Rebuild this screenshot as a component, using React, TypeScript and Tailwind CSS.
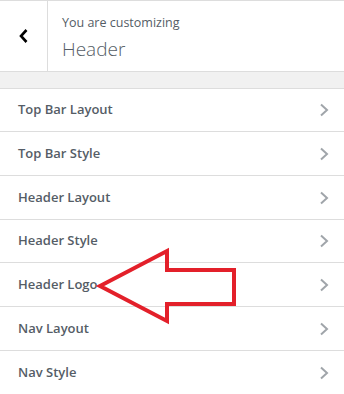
import React from "react";

const items: { t: string; h: string }[] = [
  { t: "Top Bar Layout", h: "h-[43px]" },
  { t: "Top Bar Style", h: "h-[44px]" },
  { t: "Header Layout", h: "h-[44px]" },
  { t: "Header Style", h: "h-[43px]" },
  { t: "Header Logo", h: "h-[44px]" },
  { t: "Nav Layout", h: "h-[44px]" },
  { t: "Nav Style", h: "h-[44px]" },
];

function Chevron() {
  return (
    <svg width="10" height="14" viewBox="0 0 10 14" className="block">
      <polyline points="2,1.5 8,7 2,12.5" fill="none" stroke="#a0a5aa" strokeWidth="2" />
    </svg>
  );
}

export default function App() {
  return (
    <div
      className="relative w-[344px] h-[394px] bg-white overflow-hidden"
      style={{ fontFamily: '"Open Sans", "Noto Sans", sans-serif' }}
    >
      <div className="flex h-[72px] border-t border-b border-[#dddddd]">
        <div className="w-[48px] border-r border-[#dddddd] flex items-center justify-center">
          <svg width="12" height="16" viewBox="0 0 12 16" className="block">
            <polyline points="8.5,2 3,8 8.5,14" fill="none" stroke="#000" strokeWidth="2.6" />
          </svg>
        </div>
        <div className="flex flex-col pl-[14px] pt-[14px]">
          <div className="text-[12.5px] leading-[16px] text-[#555d66]">You are customizing</div>
          <div className="text-[19px] leading-[26px] font-light text-[#555d66] mt-[5px]">Header</div>
        </div>
      </div>
      <div className="h-[17px] bg-[#f1f1f1] border-b border-[#dddddd]" />
      <div>
        {items.map(({ t, h }) => (
          <div
            key={t}
            className={`flex items-center justify-between ${h} border-b border-[#dddddd] pl-[18px] pr-[15px]`}
          >
            <span className="text-[13px] font-semibold text-[#555d66]">{t}</span>
            <Chevron />
          </div>
        ))}
      </div>
      <svg
        className="absolute left-0 top-0 pointer-events-none"
        width="344"
        height="394"
        viewBox="0 0 344 394"
      >
        <polygon
          points="100,286 167,251 167,270 234,270 234,304 167,304 167,321"
          fill="none"
          stroke="#e3202a"
          strokeWidth="4"
          strokeLinejoin="miter"
        />
      </svg>
    </div>
  );
}
